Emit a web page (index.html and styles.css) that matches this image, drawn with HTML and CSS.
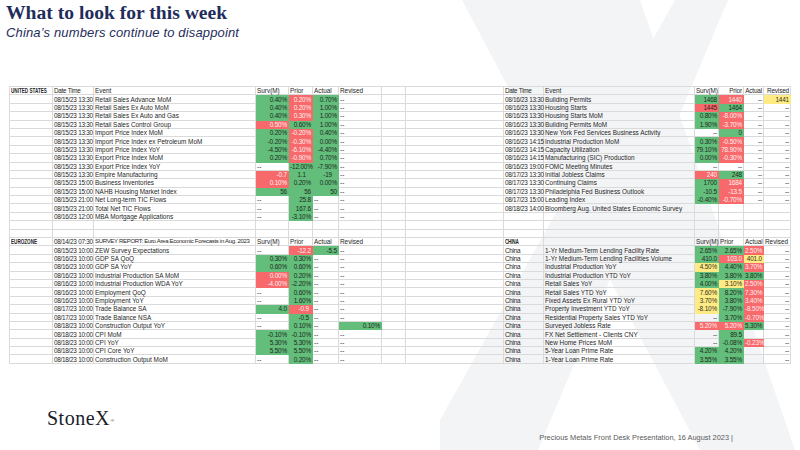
FILE: index.html
```html
<!DOCTYPE html>
<html lang="en">
<head>
<meta charset="utf-8">
<title>What to look for this week</title>
<link rel="stylesheet" href="styles.css">
</head>
<body>
<div class="slide">
  <svg class="watermark" viewBox="0 0 800 450" xmlns="http://www.w3.org/2000/svg" aria-hidden="true">
    <polygon class="wm" points="462,0 640,0 795,450 700,450"/>
    <polygon class="wm" points="675,0 728,0 538,450 440,450 440,420"/>
  </svg>
  <div class="content">
    <header class="head">
      <h1 class="title">What to look for this week</h1>
      <h2 class="subtitle">China’s numbers continue to disappoint</h2>
    </header>
    <table class="sheet">
      <colgroup>
        <col class="c1"><col class="c2"><col class="c3"><col class="c4"><col class="c5"><col class="c6"><col class="c7"><col class="c8"><col class="c9"><col class="c10"><col class="c11"><col class="c12"><col class="c13"><col class="c14"><col class="c15">
      </colgroup>
      <tbody>
        <tr><td class="b"><span class="lbl">UNITED STATES</span></td><td>Date Time</td><td>Event</td><td>Surv(M)</td><td>Prior</td><td>Actual</td><td>Revised</td><td></td><td></td><td>Date Time</td><td>Event</td><td class="n">Surv(M)</td><td class="n">Prior</td><td class="n">Actual</td><td class="n">Revised</td></tr>
        <tr><td></td><td>08/15/23 13:30</td><td>Retail Sales Advance MoM</td><td class="n g">0.40%</td><td class="n r">0.20%</td><td class="n g">0.70%</td><td>--</td><td></td><td></td><td>08/16/23 13:30</td><td>Building Permits</td><td class="n g">1468</td><td class="n r">1440</td><td class="n">--</td><td class="n y">1441</td></tr>
        <tr><td></td><td>08/15/23 13:30</td><td>Retail Sales Ex Auto MoM</td><td class="n g">0.40%</td><td class="n r">0.20%</td><td class="n g">1.00%</td><td>--</td><td></td><td></td><td>08/16/23 13:30</td><td>Housing Starts</td><td class="n r dk">1445</td><td class="n g">1464</td><td class="n">--</td><td class="n">--</td></tr>
        <tr><td></td><td>08/15/23 13:30</td><td>Retail Sales Ex Auto and Gas</td><td class="n g">0.40%</td><td class="n r">0.30%</td><td class="n g">1.00%</td><td>--</td><td></td><td></td><td>08/16/23 13:30</td><td>Housing Starts MoM</td><td class="n g">0.80%</td><td class="n r">-8.00%</td><td class="n">--</td><td class="n">--</td></tr>
        <tr><td></td><td>08/15/23 13:30</td><td>Retail Sales Control Group</td><td class="n r">0.50%</td><td class="n g">0.60%</td><td class="n g">1.00%</td><td>--</td><td></td><td></td><td>08/16/23 13:30</td><td>Building Permits MoM</td><td class="n g">1.90%</td><td class="n r">-3.70%</td><td class="n">--</td><td class="n">--</td></tr>
        <tr><td></td><td>08/15/23 13:30</td><td>Import Price Index MoM</td><td class="n g">0.20%</td><td class="n r">-0.20%</td><td class="n g">0.40%</td><td>--</td><td></td><td></td><td>08/16/23 13:30</td><td>New York Fed Services Business Activity</td><td class="n">--</td><td class="n g">0</td><td class="n">--</td><td class="n">--</td></tr>
        <tr><td></td><td>08/15/23 13:30</td><td>Import Price Index ex Petroleum MoM</td><td class="n g">-0.20%</td><td class="n r">-0.30%</td><td class="n g">0.00%</td><td>--</td><td></td><td></td><td>08/16/23 14:15</td><td>Industrial Production MoM</td><td class="n g">0.30%</td><td class="n r">-0.50%</td><td class="n">--</td><td class="n">--</td></tr>
        <tr><td></td><td>08/15/23 13:30</td><td>Import Price Index YoY</td><td class="n g">-4.50%</td><td class="n r">-6.10%</td><td class="n g">-4.40%</td><td>--</td><td></td><td></td><td>08/16/23 14:15</td><td>Capacity Utilization</td><td class="n g">79.10%</td><td class="n r">78.90%</td><td class="n">--</td><td class="n">--</td></tr>
        <tr><td></td><td>08/15/23 13:30</td><td>Export Price Index MoM</td><td class="n g">0.20%</td><td class="n r">-0.90%</td><td class="n g">0.70%</td><td>--</td><td></td><td></td><td>08/16/23 14:15</td><td>Manufacturing (SIC) Production</td><td class="n g">0.00%</td><td class="n r">-0.30%</td><td class="n">--</td><td class="n">--</td></tr>
        <tr><td></td><td>08/15/23 13:30</td><td>Export Price Index YoY</td><td>--</td><td class="n g">-12.00%</td><td class="n g">-7.90%</td><td>--</td><td></td><td></td><td>08/16/23 19:00</td><td>FOMC Meeting Minutes</td><td class="n">--</td><td class="n">--</td><td class="n">--</td><td class="n">--</td></tr>
        <tr><td></td><td>08/15/23 13:30</td><td>Empire Manufacturing</td><td class="n r">-0.7</td><td class="n g p">1.1</td><td class="n g p">-19</td><td>--</td><td></td><td></td><td>08/17/23 13:30</td><td>Initial Jobless Claims</td><td class="n r">240</td><td class="n g">248</td><td class="n">--</td><td class="n">--</td></tr>
        <tr><td></td><td>08/15/23 15:00</td><td>Business Inventories</td><td class="n r">0.10%</td><td class="n g">0.20%</td><td class="n g">0.00%</td><td>--</td><td></td><td></td><td>08/17/23 13:30</td><td>Continuing Claims</td><td class="n g">1700</td><td class="n r">1684</td><td class="n">--</td><td class="n">--</td></tr>
        <tr><td></td><td>08/15/23 15:00</td><td>NAHB Housing Market Index</td><td class="n g">56</td><td class="n g">56</td><td class="n g">50</td><td>--</td><td></td><td></td><td>08/17/23 13:30</td><td>Philadelphia Fed Business Outlook</td><td class="n g">-10.5</td><td class="n r">-13.5</td><td class="n">--</td><td class="n">--</td></tr>
        <tr><td></td><td>08/15/23 21:00</td><td>Net Long-term TIC Flows</td><td>--</td><td class="n g">25.8</td><td>--</td><td>--</td><td></td><td></td><td>08/17/23 15:00</td><td>Leading Index</td><td class="n g">-0.40%</td><td class="n r">-0.70%</td><td class="n">--</td><td class="n">--</td></tr>
        <tr><td></td><td>08/15/23 21:00</td><td>Total Net TIC Flows</td><td>--</td><td class="n g">167.6</td><td>--</td><td>--</td><td></td><td></td><td>08/18/23 14:00</td><td>Bloomberg Aug. United States Economic Survey</td><td></td><td></td><td></td><td></td></tr>
        <tr><td></td><td>08/16/23 12:00</td><td>MBA Mortgage Applications</td><td>--</td><td class="n g">-3.10%</td><td>--</td><td>--</td><td></td><td></td><td></td><td></td><td></td><td></td><td></td><td></td></tr>
        <tr><td></td><td></td><td></td><td></td><td></td><td></td><td></td><td></td><td></td><td></td><td></td><td></td><td></td><td></td><td></td></tr>
        <tr><td></td><td></td><td></td><td></td><td></td><td></td><td></td><td></td><td></td><td></td><td></td><td></td><td></td><td></td><td></td></tr>
        <tr><td class="b"><span class="lbl">EUROZONE</span></td><td>08/14/23 07:30</td><td class="tight">SURVEY REPORT: Euro Area Economic Forecasts in Aug. 2023</td><td>Surv(M)</td><td>Prior</td><td>Actual</td><td>Revised</td><td></td><td></td><td class="b"><span class="lbl">CHINA</span></td><td></td><td>Surv(M)</td><td>Prior</td><td>Actual</td><td>Revised</td></tr>
        <tr><td></td><td>08/15/23 10:00</td><td>ZEW Survey Expectations</td><td>--</td><td class="n r">-12.2</td><td class="n g">-5.5</td><td>--</td><td></td><td></td><td>China</td><td>1-Yr Medium-Term Lending Facility Rate</td><td class="n g">2.65%</td><td class="n g">2.65%</td><td class="n r">2.50%</td><td class="n">--</td></tr>
        <tr><td></td><td>08/16/23 10:00</td><td>GDP SA QoQ</td><td class="n g">0.30%</td><td class="n g">0.30%</td><td>--</td><td>--</td><td></td><td></td><td>China</td><td>1-Yr Medium-Term Lending Facilities Volume</td><td class="n g">410.0</td><td class="n r">103.0</td><td class="n y">401.0</td><td class="n">--</td></tr>
        <tr><td></td><td>08/16/23 10:00</td><td>GDP SA YoY</td><td class="n g">0.60%</td><td class="n g">0.60%</td><td>--</td><td>--</td><td></td><td></td><td>China</td><td>Industrial Production YoY</td><td class="n y">4.50%</td><td class="n g">4.40%</td><td class="n r">3.70%</td><td class="n">--</td></tr>
        <tr><td></td><td>08/16/23 10:00</td><td>Industrial Production SA MoM</td><td class="n r">0.00%</td><td class="n g">0.20%</td><td>--</td><td>--</td><td></td><td></td><td>China</td><td>Industrial Production YTD YoY</td><td class="n g">3.80%</td><td class="n g">3.80%</td><td class="n g">3.80%</td><td class="n">--</td></tr>
        <tr><td></td><td>08/16/23 10:00</td><td>Industrial Production WDA YoY</td><td class="n r">-4.00%</td><td class="n g">-2.20%</td><td>--</td><td>--</td><td></td><td></td><td>China</td><td>Retail Sales YoY</td><td class="n g">4.00%</td><td class="n y">3.10%</td><td class="n r">2.50%</td><td class="n">--</td></tr>
        <tr><td></td><td>08/16/23 10:00</td><td>Employment QoQ</td><td>--</td><td class="n g">0.60%</td><td>--</td><td>--</td><td></td><td></td><td>China</td><td>Retail Sales YTD YoY</td><td class="n y">7.60%</td><td class="n g">8.20%</td><td class="n r">7.30%</td><td class="n">--</td></tr>
        <tr><td></td><td>08/16/23 10:00</td><td>Employment YoY</td><td>--</td><td class="n g">1.60%</td><td>--</td><td>--</td><td></td><td></td><td>China</td><td>Fixed Assets Ex Rural YTD YoY</td><td class="n y">3.70%</td><td class="n g">3.80%</td><td class="n r">3.40%</td><td class="n">--</td></tr>
        <tr><td></td><td>08/17/23 10:00</td><td>Trade Balance SA</td><td class="n g">4.0</td><td class="n r p2">-0.9</td><td>--</td><td>--</td><td></td><td></td><td>China</td><td>Property Investment YTD YoY</td><td class="n y">-8.10%</td><td class="n g">-7.90%</td><td class="n r">-8.50%</td><td class="n">--</td></tr>
        <tr><td></td><td>08/17/23 10:00</td><td>Trade Balance NSA</td><td>--</td><td class="n g p2">-0.5</td><td>--</td><td>--</td><td></td><td></td><td>China</td><td>Residential Property Sales YTD YoY</td><td class="n">--</td><td class="n g">3.70%</td><td class="n r">-0.70%</td><td class="n">--</td></tr>
        <tr><td></td><td>08/18/23 10:00</td><td>Construction Output YoY</td><td>--</td><td class="n g">0.10%</td><td>--</td><td class="n g">0.10%</td><td></td><td></td><td>China</td><td>Surveyed Jobless Rate</td><td class="n r">5.20%</td><td class="n r">5.20%</td><td class="n g">5.30%</td><td class="n">--</td></tr>
        <tr><td></td><td>08/18/23 10:00</td><td>CPI MoM</td><td class="n g">-0.10%</td><td class="n g">-0.10%</td><td>--</td><td>--</td><td></td><td></td><td>China</td><td>FX Net Settlement - Clients CNY</td><td class="n">--</td><td class="n g">89.5</td><td></td><td class="n">--</td></tr>
        <tr><td></td><td>08/18/23 10:00</td><td>CPI YoY</td><td class="n g">5.30%</td><td class="n g">5.30%</td><td>--</td><td>--</td><td></td><td></td><td>China</td><td>New Home Prices MoM</td><td class="n">--</td><td class="n g">-0.08%</td><td class="n r">-0.23%</td><td class="n">--</td></tr>
        <tr><td></td><td>08/18/23 10:00</td><td>CPI Core YoY</td><td class="n g">5.50%</td><td class="n g">5.50%</td><td>--</td><td>--</td><td></td><td></td><td>China</td><td>5-Year Loan Prime Rate</td><td class="n g">4.20%</td><td class="n g">4.20%</td><td></td><td class="n">--</td></tr>
        <tr><td></td><td>08/18/23 10:00</td><td>Construction Output MoM</td><td>--</td><td class="n g">0.20%</td><td>--</td><td>--</td><td></td><td></td><td>China</td><td>1-Year Loan Prime Rate</td><td class="n g">3.55%</td><td class="n g">3.55%</td><td></td><td class="n">--</td></tr>
      </tbody>
    </table>
    <footer class="bottom">
      <div class="logo">StoneX<span class="reg">®</span></div>
      <div class="footnote">Precious Metals Front Desk Presentation, 16 August 2023 |</div>
    </footer>
  </div>
</div>
</body>
</html>
```

FILE: styles.css
```css
* { box-sizing: border-box; }
html, body { margin: 0; padding: 0; }
body {
  width: 800px;
  height: 450px;
  overflow: hidden;
  background: #ffffff;
  font-family: "Liberation Sans", Arial, sans-serif;
}
.slide {
  position: relative;
  width: 800px;
  height: 450px;
  overflow: hidden;
  background: #ffffff;
}
.watermark {
  position: absolute;
  left: 0;
  top: 0;
  width: 800px;
  height: 450px;
  z-index: 0;
}
.wm { fill: #f3f4f6; }
.content {
  position: relative;
  z-index: 1;
  display: flex;
  flex-direction: column;
}
.head {
  padding: 2.4px 0 0 6px;
  color: #1f2d5c;
}
.title {
  margin: 0;
  font-family: "Liberation Serif", "Times New Roman", serif;
  font-weight: 700;
  font-size: 19.6px;
  line-height: 22px;
}
.subtitle {
  margin: 0.6px 0 0;
  font-family: "Liberation Sans", Arial, sans-serif;
  font-style: italic;
  font-weight: 400;
  font-size: 13px;
  line-height: 15px;
  letter-spacing: 0.15px;
}
.sheet {
  margin: 46px 0 0 9px;
  width: 781px;
  table-layout: fixed;
  border-collapse: separate;
  border-spacing: 0;
  border-top: 1px solid #dadada;
  border-left: 1px solid #dadada;
  font-size: 6.4px;
  color: #262626;
}
.c1 { width: 43px; }
.c2 { width: 41px; }
.c3 { width: 162px; }
.c4 { width: 33px; }
.c5 { width: 24px; }
.c6 { width: 26px; }
.c7 { width: 43px; }
.c8 { width: 24px; }
.c9 { width: 98px; }
.c10 { width: 40px; }
.c11 { width: 151px; }
.c12 { width: 24px; }
.c13 { width: 25px; }
.c14 { width: 20px; }
.c15 { width: 27px; }
.sheet tr { height: 8.4px; }
.sheet td {
  padding: 0 1px;
  border-right: 1px solid #dadada;
  border-bottom: 1px solid #dadada;
  white-space: nowrap;
  line-height: 7px;
  vertical-align: middle;
  overflow: visible;
}
.sheet td:nth-child(2),
.sheet td:nth-child(10) { letter-spacing: -0.28px; }
.sheet td.n { text-align: right; letter-spacing: -0.15px; }
.sheet td.b { font-weight: 700; }
.lbl {
  display: inline-block;
  transform: scaleX(0.72);
  transform-origin: left center;
}
.sheet td.tight { font-size: 6px; letter-spacing: -0.3px; }
.sheet td.p { padding-right: 6px; }
.sheet td.p2 { padding-right: 3px; }
.sheet td.g {
  background: #63be7b;
  border-color: transparent;
  color: #1e2a1e;
}
.sheet td.r {
  background: #f8696b;
  border-color: transparent;
  color: #fff0f0;
}
.sheet td.r.dk { color: #3a1a1a; }
.sheet td.y {
  background: #ffeb84;
  border-color: transparent;
  color: #333322;
}
.bottom {
  display: flex;
  align-items: flex-start;
  margin-top: 43px;
  padding-left: 47px;
}
.logo {
  font-family: "Liberation Serif", "Times New Roman", serif;
  font-size: 20px;
  line-height: 22px;
  color: #1a1d29;
  letter-spacing: 0.5px;
}
.reg {
  font-size: 5px;
  vertical-align: top;
  position: relative;
  top: 3px;
  margin-left: 0.5px;
}
.footnote {
  margin-left: auto;
  margin-right: 67px;
  margin-top: 26px;
  font-size: 7.4px;
  line-height: 9px;
  color: #595959;
  white-space: nowrap;
}
```
